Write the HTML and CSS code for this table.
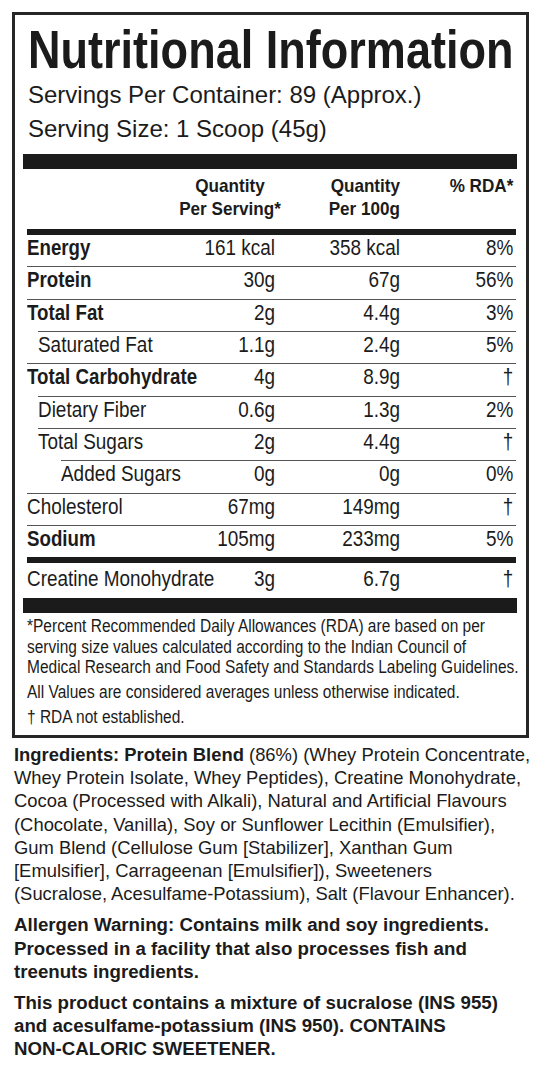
FILE: index.html
```html
<!DOCTYPE html>
<html>
<head>
    <meta charset="utf-8">
    <title>Nutritional Information</title>
    <link rel="stylesheet" href="styles.css">
</head>
<body>
    <div class="label-panel">
        <h1 class="label-title">Nutritional Information</h1>
        <p class="label-serving">Servings Per Container: 89 (Approx.)</p>
        <p class="label-serving">Serving Size: 1 Scoop (45g)</p>

        <div class="label-bar"></div>

        <div class="facts">
            <div class="facts-head">
                <span></span>
                <span class="facts-head-serving">Quantity<br>Per Serving*</span>
                <span class="facts-head-100g">Quantity<br>Per 100g</span>
                <span class="facts-head-rda">% RDA*</span>
            </div>

            <div class="facts-row facts-row-first facts-row-bold">
                <span class="facts-name">Energy</span><span>161 kcal</span><span>358 kcal</span><span class="facts-rda">8%</span>
            </div>
            <div class="facts-row facts-row-bold">
                <span class="facts-name">Protein</span><span>30g</span><span>67g</span><span class="facts-rda">56%</span>
            </div>
            <div class="facts-row facts-row-bold">
                <span class="facts-name">Total Fat</span><span>2g</span><span>4.4g</span><span class="facts-rda">3%</span>
            </div>
            <div class="facts-row facts-row-sub">
                <span class="facts-name">Saturated Fat</span><span>1.1g</span><span>2.4g</span><span class="facts-rda">5%</span>
            </div>
            <div class="facts-row facts-row-bold">
                <span class="facts-name">Total Carbohydrate</span><span>4g</span><span>8.9g</span><span class="facts-rda">&dagger;</span>
            </div>
            <div class="facts-row facts-row-sub">
                <span class="facts-name">Dietary Fiber</span><span>0.6g</span><span>1.3g</span><span class="facts-rda">2%</span>
            </div>
            <div class="facts-row facts-row-sub">
                <span class="facts-name">Total Sugars</span><span>2g</span><span>4.4g</span><span class="facts-rda">&dagger;</span>
            </div>
            <div class="facts-row facts-row-subsub">
                <span class="facts-name">Added Sugars</span><span>0g</span><span>0g</span><span class="facts-rda">0%</span>
            </div>
            <div class="facts-row">
                <span class="facts-name">Cholesterol</span><span>67mg</span><span>149mg</span><span class="facts-rda">&dagger;</span>
            </div>
            <div class="facts-row facts-row-bold">
                <span class="facts-name">Sodium</span><span>105mg</span><span>233mg</span><span class="facts-rda">5%</span>
            </div>
            <div class="facts-row facts-row-extra">
                <span class="facts-name">Creatine Monohydrate</span><span>3g</span><span>6.7g</span><span class="facts-rda">&dagger;</span>
            </div>
        </div>

        <div class="label-bar"></div>

        <div class="label-notes">
            <p>*Percent Recommended Daily Allowances (RDA) are based on per<br>serving size values calculated according to the Indian Council of<br>Medical Research and Food Safety and Standards Labeling Guidelines.</p>
            <p>All Values are considered averages unless otherwise indicated.</p>
            <p>&dagger; RDA not established.</p>
        </div>
    </div>

    <div class="label-text">
        <p class="label-ingredients"><b>Ingredients: Protein Blend</b> (86%) (Whey Protein Concentrate,<br>Whey Protein Isolate, Whey Peptides), Creatine Monohydrate,<br>Cocoa (Processed with Alkali), Natural and Artificial Flavours<br>(Chocolate, Vanilla), Soy or Sunflower Lecithin (Emulsifier),<br>Gum Blend (Cellulose Gum [Stabilizer], Xanthan Gum<br>[Emulsifier], Carrageenan [Emulsifier]), Sweeteners<br>(Sucralose, Acesulfame-Potassium), Salt (Flavour Enhancer).</p>
        <p class="label-warning">Allergen Warning: Contains milk and soy ingredients.<br>Processed in a facility that also processes fish and<br>treenuts ingredients.</p>
        <p class="label-warning">This product contains a mixture of sucralose (INS 955)<br>and acesulfame-potassium (INS 950). CONTAINS<br>NON-CALORIC SWEETENER.</p>
    </div>
</body>
</html>
```

FILE: styles.css
```css
:root {
    --ink: #1b1b1b;
    --rule: #555555;
    --sans: 'Liberation Sans', Arial, sans-serif;
}

html, body {
    margin: 0;
    padding: 0;
    background: #ffffff;
    color: var(--ink);
    font-family: var(--sans);
}

* {
    box-sizing: border-box;
}

p {
    margin: 0;
}

/* no condensed face is installed, so the narrow parts are squeezed */
.label-panel {
    width: 517px;
    margin: 12px 0 0 12px;
    border: 3px solid #262626;
    padding: 7px 9px 7.5px 8px;
}

.label-title {
    margin: 0 0 0 5px;
    font-size: 53px;
    font-weight: 700;
    line-height: 56px;
    white-space: nowrap;
    transform: scaleX(0.85);
    transform-origin: left center;
}

.label-serving {
    margin-left: 5px;
    font-size: 24px;
    line-height: 34px;
}

.label-bar {
    height: 15px;
    background: var(--ink);
}

.label-serving + .label-bar {
    margin-top: 8px;
}

.facts {
    margin: 0 1px 0 4px;
}

.facts-head {
    display: grid;
    grid-template-columns: minmax(0, 1fr) 130px 105px 116px;
    padding: 5px 0 9px;
    border-bottom: 6px solid var(--ink);
    font-size: 19px;
    font-weight: 700;
    line-height: 23px;
    white-space: nowrap;
}

.facts-head span {
    transform: scaleX(0.9);
}

.facts-head-serving {
    text-align: center;
}

.facts-head-100g {
    text-align: right;
    transform-origin: right center;
}

.facts-head-rda {
    text-align: right;
    padding-right: 3px;
    transform-origin: right center;
}

.facts-row {
    display: grid;
    grid-template-columns: minmax(0, 1fr) 90px 125px 116px;
    border-top: 1px solid var(--rule);
    padding-bottom: 5.33px;
    font-size: 21.5px;
    line-height: 26px;
    white-space: nowrap;
}

.facts-row span {
    text-align: right;
    transform: scaleX(0.88);
    transform-origin: right center;
}

.facts-row .facts-name {
    text-align: left;
    transform-origin: left center;
}

.facts-row .facts-rda {
    padding-right: 3px;
}

.facts-row-first {
    border-top: none;
}

.facts-row-bold .facts-name {
    font-size: 22px;
    font-weight: 700;
    transform: scaleX(0.85);
}

.facts-row-sub {
    margin-left: 11px;
}

.facts-row-subsub {
    margin-left: 34px;
}

.facts-row-extra {
    border-top: 6px solid var(--ink);
    padding: 3px 0 6px;
}

.label-notes {
    margin: 0 0 0 4px;
    padding-top: 3px;
    font-size: 17.5px;
    line-height: 20.3px;
    white-space: nowrap;
    transform: scaleX(0.885);
    transform-origin: left top;
}

.label-notes p + p {
    margin-top: 4.7px;
}

.label-text {
    padding: 5px 0 0 14px;
    white-space: nowrap;
}

.label-ingredients {
    font-size: 18.4px;
    line-height: 23.3px;
}

.label-warning {
    margin-top: 7.5px;
    font-size: 18.7px;
    font-weight: 700;
    line-height: 23.3px;
}
```
